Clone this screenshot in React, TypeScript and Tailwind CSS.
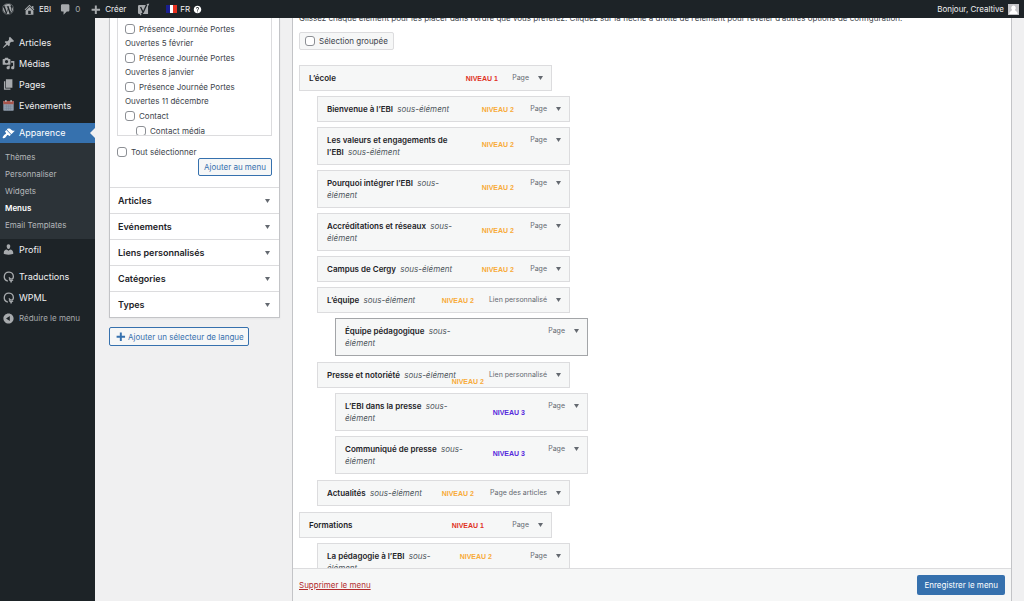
import type { ReactNode } from 'react';
import { FaWordpress } from 'react-icons/fa';
import { MdHelp } from 'react-icons/md';

interface MenuNode {
  title: string;
  type: string;
  level?: 1 | 2 | 3;
  badgePos?: string;
  active?: boolean;
  children?: MenuNode[];
}

const levelColors = {
  1: 'text-[#e0321f]',
  2: 'text-[#f8ab39]',
  3: 'text-[#5529dc]',
};

const menu: MenuNode[] = [
  {
    title: 'L’école',
    type: 'Page',
    level: 1,
    badgePos: 'top-2 right-[53px]',
    children: [
      { title: 'Bienvenue à l’EBI', type: 'Page', level: 2, badgePos: 'top-2 right-[55px]' },
      {
        title: 'Les valeurs et engagements de l’EBI',
        type: 'Page',
        level: 2,
        badgePos: 'top-3 right-[55px]',
      },
      { title: 'Pourquoi intégrer l’EBI', type: 'Page', level: 2, badgePos: 'top-3 right-[55px]' },
      { title: 'Accréditations et réseaux', type: 'Page', level: 2, badgePos: 'top-3 right-[55px]' },
      { title: 'Campus de Cergy', type: 'Page', level: 2, badgePos: 'top-2 right-[55px]' },
      {
        title: 'L’équipe',
        type: 'Lien personnalisé',
        level: 2,
        badgePos: 'top-2 right-[95px]',
        children: [{ title: 'Équipe pédagogique', type: 'Page', active: true }],
      },
      {
        title: 'Presse et notoriété',
        type: 'Lien personnalisé',
        level: 2,
        badgePos: 'top-[14px] right-[85px]',
        children: [
          { title: 'L’EBI dans la presse', type: 'Page', level: 3, badgePos: 'top-[14px] right-[62px]' },
          { title: 'Communiqué de presse', type: 'Page', level: 3, badgePos: 'top-3 right-[62px]' },
        ],
      },
      { title: 'Actualités', type: 'Page des articles', level: 2, badgePos: 'top-2 right-[95px]' },
    ],
  },
  {
    title: 'Formations',
    type: 'Page',
    level: 1,
    badgePos: 'top-2 right-[67px]',
    children: [
      { title: 'La pédagogie à l’EBI', type: 'Page', level: 2, badgePos: 'top-2 right-[77px]' },
    ],
  },
];

const pages = [
  'Présence Journée Portes Ouvertes 5 février',
  'Présence Journée Portes Ouvertes 8 janvier',
  'Présence Journée Portes Ouvertes 11 décembre',
  'Contact',
];

const sections = ['Articles', 'Evénements', 'Liens personnalisés', 'Catégories', 'Types'];

const icons = {
  post: 'M10.44 3.02l1.82-1.82 6.36 6.35-1.83 1.82c-1.05-.68-2.48-.57-3.41.36l-.75.75c-.92.93-1.04 2.35-.35 3.41l-1.83 1.82-2.41-2.41-2.8 2.79c-.42.42-3.38 2.71-3.8 2.29s1.86-3.39 2.28-3.81l2.79-2.79L4.1 9.36l1.83-1.82c1.05.69 2.48.57 3.4-.36l.75-.75c.93-.92 1.05-2.35.36-3.41z',
  media:
    'M13 11V4c0-.55-.45-1-1-1h-1.67L9 1H5L3.67 3H2c-.55 0-1 .45-1 1v7c0 .55.45 1 1 1h10c.55 0 1-.45 1-1zM7 4.5c1.38 0 2.5 1.12 2.5 2.5S8.38 9.5 7 9.5 4.5 8.38 4.5 7 5.62 4.5 7 4.500zM14 6h5v10.500c0 1.380-1.120 2.500-2.500 2.500S14 17.880 14 16.500s1.120-2.500 2.500-2.500c.170 0 .340.020.500.050V9h-3V6zm-4 8.050V13h2v3.500c0 1.380-1.120 2.500-2.500 2.500S7 17.880 7 16.500 8.120 14 9.500 14c.170 0 .340.020.500.050z',
  page: 'M6 15V2h10v13H6zm-1 1h8v2H3V5h2v11z',
  appearance:
    'M14.48 11.06L7.41 3.99l1.5-1.5c.5-.56 2.3-.47 3.51.32 1.21.8 1.43 1.28 2.91 2.1 1.18.64 2.45 1.26 4.45.85zm-.71.71L6.7 4.7 4.93 6.47c-.39.39-.39 1.02 0 1.41l1.06 1.06c.39.39.39 1.03 0 1.42-.6.6-1.43 1.11-2.21 1.69-.35.26-.7.53-1.01.84C1.43 14.23.4 16.08 1.4 17.07c.99 1 2.84-.03 4.18-1.36.31-.31.58-.66.85-1.02.57-.78 1.08-1.61 1.69-2.21.39-.39 1.02-.39 1.41 0l1.06 1.06c.39.39 1.02.39 1.41 0z',
  user: 'M10 9.25c-2.27 0-2.73-3.44-2.73-3.44C7 4.02 7.82 2 9.97 2c2.16 0 2.98 2.02 2.71 3.81 0 0-.41 3.44-2.68 3.44zm0 2.57L12.72 10c2.39 0 4.52 2.33 4.52 4.53v2.49s-3.65 1.13-7.24 1.13c-3.65 0-7.24-1.13-7.24-1.13v-2.49c0-2.25 1.94-4.48 4.47-4.48z',
  home: 'M16 8.5l1.53 1.53-1.06 1.06L10 4.6l-6.47 6.49-1.06-1.06L10 2.5l4 4v-2h2v4zm-6-2.46l6 5.99V18H4v-5.97zM12 17v-5H8v5h4z',
  comment: 'M5 2h9c1.1 0 2 .9 2 2v7c0 1.1-.9 2-2 2h-2l-5 5v-5H5c-1.1 0-2-.9-2-2V4c0-1.1.9-2 2-2z',
  plus: 'M17 9v3h-5v5H9v-5H4V9h5V4h3v5h5z',
  collapse:
    'M10 2.16c4.33 0 7.84 3.51 7.84 7.84s-3.51 7.84-7.84 7.84S2.16 14.33 2.16 10 5.71 2.16 10 2.16zm2 11.72V6.12L6.18 9.97z',
};

function Icon({ name }: { name: keyof typeof icons }) {
  return (
    <svg viewBox="0 0 20 20" className="size-[13px] shrink-0" fill="currentColor" aria-hidden="true">
      <path d={icons[name]} />
    </svg>
  );
}

function CalendarIcon() {
  return (
    <svg viewBox="0 0 20 20" className="size-[13px] shrink-0" aria-hidden="true">
      <rect x="2" y="3" width="16" height="15" rx="1" fill="#8f9cac" />
      <path d="M2 3h16v5H2z" fill="#a8554c" />
      <path d="M5 1.500h2v3H5zM13 1.500h2v3h-2z" fill="#b5babf" />
      <path d="M4 11h12M4 14.500h12M7 9v8M10 9v8M13 9v8" stroke="#768394" strokeWidth=".7" />
    </svg>
  );
}

function WpmlIcon() {
  return (
    <svg
      viewBox="0 0 20 20"
      className="size-[13px] shrink-0"
      fill="none"
      stroke="currentColor"
      strokeWidth="2"
      aria-hidden="true"
    >
      <path d="M9 17A7 7 0 1 1 17.500 10c0 2.500-1.500 4-3.300 4-1.700 0-3-1.200-3-2.700" />
      <path d="M11 14.500c1.500 2 4 2.300 6 1" />
      <circle cx="14" cy="18" r="1.300" fill="currentColor" stroke="none" />
    </svg>
  );
}

function YoastIcon() {
  return (
    <svg viewBox="0 0 20 20" className="size-[13px] shrink-0" aria-hidden="true">
      <path d="M5 3h8.500l3-2H19l-2 4v12H8l-2 2H4.500v-2H3.500a2 2 0 0 1-2-2V5a2 2 0 0 1 2-2z" fill="#a7aaad" />
      <path
        d="M5.500 6l3.700 8M15 2.500L9.800 14c-.8 2-1.600 3-3.800 3.200"
        fill="none"
        stroke="#1d2327"
        strokeWidth="2"
      />
    </svg>
  );
}

function Arrow() {
  return (
    <svg viewBox="0 0 5 4" className="mx-px h-1 w-[5px] shrink-0" fill="#646970" aria-hidden="true">
      <path d="M0 0h5L2.500 4z" />
    </svg>
  );
}

function Checkbox({ id }: { id: string }) {
  return (
    <input
      id={id}
      type="checkbox"
      className="size-[10px] shrink-0 appearance-none rounded-[3px] border border-[#8c8f94] bg-white checked:bg-[#3671ae]"
    />
  );
}

function SideLink({ icon, children }: { icon: ReactNode; children: ReactNode }) {
  return (
    <a href="#" className="flex h-[21px] items-center gap-1 pl-[2px] text-[#f0f0f1]">
      <span className="text-[#a7aaad]">{icon}</span>
      {children}
    </a>
  );
}

function MenuList({ nodes, depth = 0 }: { nodes: MenuNode[]; depth?: number }) {
  return (
    <ul className={depth > 0 ? 'flex flex-col gap-[5px] pt-[5px] pb-px pl-[18px]' : 'flex flex-col gap-[5px]'}>
      {nodes.map((node) => (
        <li key={node.title}>
          <div
            className={`relative flex w-[253px] items-start justify-between border bg-[#f6f7f7] py-[6px] pr-[7px] pl-[9px] ${
              node.active ? 'border-[#a3a5a8]' : 'border-[#dcdcde]'
            }`}
          >
            <div className="w-[131px] leading-3">
              <span className="mr-[2px] font-semibold text-[#1d2327]">{node.title}</span>{' '}
              {depth > 0 && <span className="text-[#50575e] italic">sous-élément</span>}
            </div>
            {node.level && (
              <span
                className={`absolute font-['Liberation_Sans',sans-serif] text-[7px] leading-[9px] font-bold whitespace-nowrap ${
                  levelColors[node.level]
                } ${node.badgePos}`}
              >
                NIVEAU {node.level}
              </span>
            )}
            <button type="button" className="flex items-center gap-2 text-[7px] leading-3 text-[#646970]">
              {node.type}
              <Arrow />
            </button>
          </div>
          {node.children && <MenuList nodes={node.children} depth={depth + 1} />}
        </li>
      ))}
    </ul>
  );
}

function TopBar() {
  return (
    <header className="relative z-10 flex h-[18px] shrink-0 items-center justify-between bg-[#1d2327] pr-[5px] pl-[2px] text-[#f0f0f1]">
      <nav className="flex items-center">
        <a href="#" aria-label="WordPress" className="mr-[9px] text-[#a7aaad]">
          <FaWordpress className="size-3" />
        </a>
        <a href="#" className="mr-2 flex items-center gap-[3px]">
          <span className="text-[#a7aaad]">
            <Icon name="home" />
          </span>
          EBI
        </a>
        <a href="#" className="mr-[9px] flex items-center gap-[3px] text-[#a7aaad]">
          <Icon name="comment" />
          0
        </a>
        <a href="#" className="mr-[11px] flex items-center gap-[3px]">
          <span className="text-[#a7aaad]">
            <Icon name="plus" />
          </span>
          Créer
        </a>
        <a href="#" aria-label="Yoast SEO" className="mr-4">
          <YoastIcon />
        </a>
        <a href="#" className="flex items-center gap-[3px]">
          <svg viewBox="0 0 11 8" className="h-2 w-[11px]" aria-hidden="true">
            <path d="M0 0h4v8H0z" fill="#1a1f8f" />
            <path d="M4 0h3v8H4z" fill="#fff" />
            <path d="M7 0h4v8H7z" fill="#e8301f" />
          </svg>
          FR
          <MdHelp className="size-[9px] text-white" />
        </a>
      </nav>
      <a href="#" className="flex items-center gap-1">
        Bonjour, Crealtive
        <svg viewBox="0 0 11 11" className="size-[11px]" aria-hidden="true">
          <path d="M0 0h11v11H0z" fill="#c3c4c7" />
          <path d="M5.500 1.500a2.200 2.400 0 0 1 1.300 4.400c.2.900 2.700 1 2.900 4.100H1.300C1.500 6.900 4 6.800 4.200 5.900A2.200 2.400 0 0 1 5.500 1.500z" fill="#fff" />
        </svg>
      </a>
    </header>
  );
}

function SideBar() {
  return (
    <nav className="w-[95px] shrink-0 bg-[#1d2327] pt-[14px] text-[9px]">
      <SideLink icon={<Icon name="post" />}>Articles</SideLink>
      <SideLink icon={<Icon name="media" />}>Médias</SideLink>
      <SideLink icon={<Icon name="page" />}>Pages</SideLink>
      <SideLink icon={<CalendarIcon />}>Evénements</SideLink>
      <a
        href="#"
        className="mt-[7px] flex h-5 items-center gap-1 bg-[#3671ae] pl-[2px] text-white"
      >
        <Icon name="appearance" />
        Apparence
        <svg viewBox="0 0 5 10" className="ml-auto h-[10px] w-[5px]" fill="#f0f0f1" aria-hidden="true">
          <path d="M5 0v10L0 5z" />
        </svg>
      </a>
      <div className="flex flex-col bg-[#2c3338] pt-[6px] pb-[5px] pl-[5px] text-[8px] leading-[17px] text-[#b4b7ba]">
        <a href="#">Thèmes</a>
        <a href="#">Personnaliser</a>
        <a href="#">Widgets</a>
        <a href="#" className="font-semibold text-white">
          Menus
        </a>
        <a href="#">Email Templates</a>
      </div>
      <SideLink icon={<Icon name="user" />}>Profil</SideLink>
      <div className="mt-[6px]">
        <SideLink icon={<WpmlIcon />}>Traductions</SideLink>
        <SideLink icon={<WpmlIcon />}>WPML</SideLink>
      </div>
      <button type="button" className="flex h-5 items-center gap-1 pl-[2px] text-[8px] text-[#a7aaad]">
        <Icon name="collapse" />
        Réduire le menu
      </button>
    </nav>
  );
}

function AddItems() {
  return (
    <aside className="w-[171px] shrink-0">
      <div className="border-x border-b border-[#c3c4c7] bg-white shadow-xs">
        <div className="px-[7px] pb-[11px]">
          <ul className="flex h-[118px] flex-col gap-px overflow-hidden border-x border-b border-[#dcdcde] px-[7px] pt-1 leading-[14px]">
            {pages.map((page, index) => (
              <li key={page}>
                <label htmlFor={`page-${index}`}>
                  <span className="mr-1 inline-flex h-[14px] items-center align-top">
                    <Checkbox id={`page-${index}`} />
                  </span>
                  {page}
                </label>
              </li>
            ))}
            <li className="pl-[11px]">
              <label htmlFor="page-media">
                <span className="mr-1 inline-flex h-[14px] items-center align-top">
                  <Checkbox id="page-media" />
                </span>
                Contact média
              </label>
            </li>
          </ul>
          <div className="flex items-center gap-1 pt-[10px] leading-3">
            <Checkbox id="select-all" />
            <label htmlFor="select-all">Tout sélectionner</label>
          </div>
          <div className="flex justify-end">
            <button
              type="button"
              className="h-[18px] rounded-[2px] border border-[#3671ae] bg-[#f6f7f7] px-[5px] text-[#3671ae]"
            >
              Ajouter au menu
            </button>
          </div>
        </div>
        {sections.map((section) => (
          <button
            key={section}
            type="button"
            className="flex h-[26px] w-full items-center justify-between border-t border-[#dcdcde] px-2 text-[9px] font-semibold text-[#1d2327]"
          >
            {section}
            <Arrow />
          </button>
        ))}
      </div>
      <button
        type="button"
        className="mt-[9px] flex h-[19px] items-center gap-px rounded-[2px] border border-[#3671ae] bg-[#f6f7f7] px-1 whitespace-nowrap text-[#3671ae]"
      >
        <Icon name="plus" />
        Ajouter un sélecteur de langue
      </button>
    </aside>
  );
}

export default function App() {
  return (
    <div className="flex h-screen flex-col overflow-hidden bg-[#f0f0f1] font-[Inter,sans-serif] text-[8px] text-[#3c434a]">
      <TopBar />
      <div className="flex min-h-0 flex-1">
        <SideBar />
        <main className="flex min-w-0 flex-1 gap-3 pr-3 pl-[14px]">
          <AddItems />
          <section className="flex min-w-0 flex-1 flex-col border-x border-[#c3c4c7] bg-white">
            <div className="min-h-0 flex-1 overflow-hidden px-[6px]">
              <p className="-mt-[6px] leading-3">
                Glissez chaque élément pour les placer dans l’ordre que vous préférez. Cliquez sur la flèche à
                droite de l’élément pour révéler d’autres options de configuration.
              </p>
              <div className="mt-2 mb-[15px] flex h-[18px] w-fit items-center gap-1 rounded-[2px] border border-[#dcdcde] bg-[#f6f7f7] px-[5px]">
                <Checkbox id="bulk-select" />
                <label htmlFor="bulk-select">Sélection groupée</label>
              </div>
              <MenuList nodes={menu} />
            </div>
            <footer className="flex h-[33px] shrink-0 items-center justify-between border-t border-[#dcdcde] bg-[#f6f7f7] px-[6px]">
              <a href="#" className="text-[#b32d2e] underline">
                Supprimer le menu
              </a>
              <button type="button" className="h-5 rounded-[2px] bg-[#3671ae] px-[7px] text-white">
                Enregistrer le menu
              </button>
            </footer>
          </section>
        </main>
      </div>
    </div>
  );
}
